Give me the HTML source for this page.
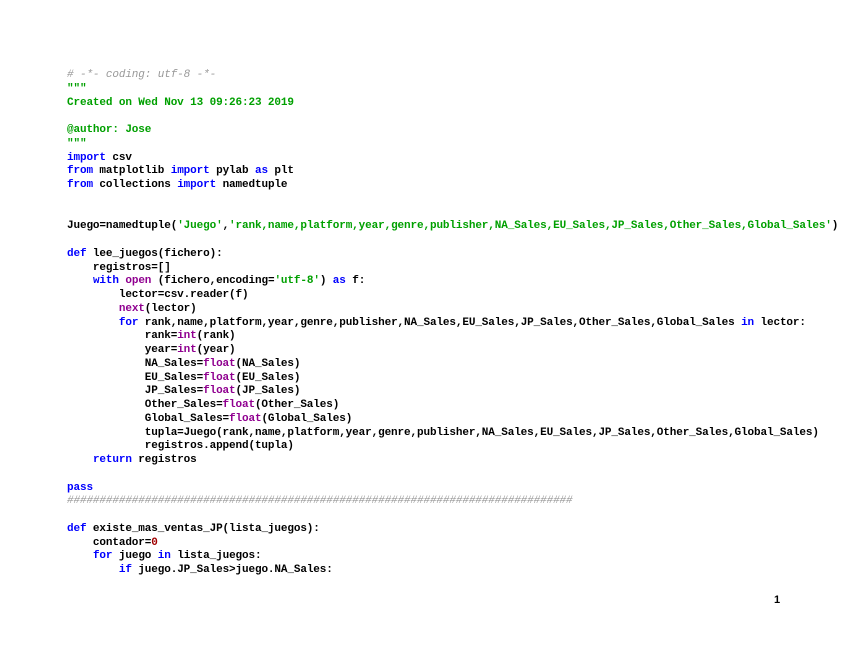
<!DOCTYPE html>
<html><head><meta charset="utf-8"><style>
html,body{margin:0;padding:0;background:#fff;width:848px;height:655px;overflow:hidden}
pre{position:absolute;left:67px;top:69px;margin:0;font-family:"Liberation Mono",monospace;font-size:11px;letter-spacing:-0.12px;line-height:13.75px;font-weight:bold;color:#000}
.k{color:#0000ff}.b{color:#900090}.s{color:#00a000}.c{color:#999;font-style:italic;font-weight:normal}.n{color:#a00000}
.pg{position:absolute;left:774px;top:594px;font-family:"Liberation Sans",sans-serif;font-size:11px;font-weight:bold}
</style></head><body>
<pre><span class="c"># -*- coding: utf-8 -*-</span>
<span class="s">"""
Created on Wed Nov 13 09:26:23 2019

@author: Jose
"""</span>
<span class="k">import</span> csv
<span class="k">from</span> matplotlib <span class="k">import</span> pylab <span class="k">as</span> plt
<span class="k">from</span> collections <span class="k">import</span> namedtuple


Juego=namedtuple(<span class="s">'Juego'</span>,<span class="s">'rank,name,platform,year,genre,publisher,NA_Sales,EU_Sales,JP_Sales,Other_Sales,Global_Sales'</span>)

<span class="k">def</span> lee_juegos(fichero):
    registros=[]
    <span class="k">with</span> <span class="b">open</span> (fichero,encoding=<span class="s">'utf-8'</span>) <span class="k">as</span> f:
        lector=csv.reader(f)
        <span class="b">next</span>(lector)
        <span class="k">for</span> rank,name,platform,year,genre,publisher,NA_Sales,EU_Sales,JP_Sales,Other_Sales,Global_Sales <span class="k">in</span> lector:
            rank=<span class="b">int</span>(rank)
            year=<span class="b">int</span>(year)
            NA_Sales=<span class="b">float</span>(NA_Sales)
            EU_Sales=<span class="b">float</span>(EU_Sales)
            JP_Sales=<span class="b">float</span>(JP_Sales)
            Other_Sales=<span class="b">float</span>(Other_Sales)
            Global_Sales=<span class="b">float</span>(Global_Sales)
            tupla=Juego(rank,name,platform,year,genre,publisher,NA_Sales,EU_Sales,JP_Sales,Other_Sales,Global_Sales)
            registros.append(tupla)
    <span class="k">return</span> registros

<span class="k">pass</span>
<span class="c">##############################################################################</span>

<span class="k">def</span> existe_mas_ventas_JP(lista_juegos):
    contador=<span class="n">0</span>
    <span class="k">for</span> juego <span class="k">in</span> lista_juegos:
        <span class="k">if</span> juego.JP_Sales&gt;juego.NA_Sales:</pre>
<div class="pg">1</div>
</body></html>
